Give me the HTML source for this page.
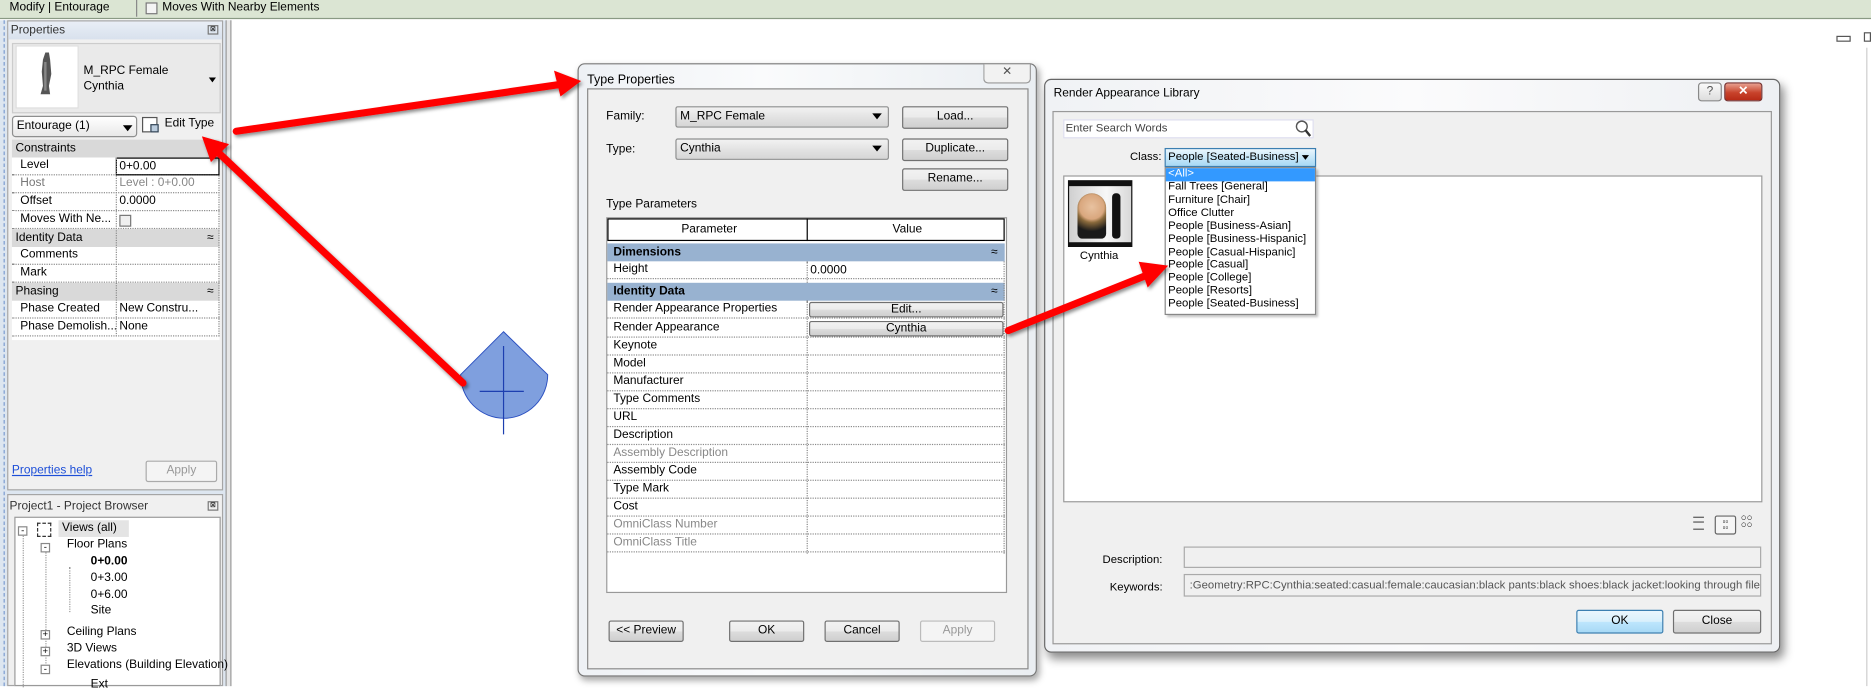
<!DOCTYPE html>
<html><head><meta charset="utf-8"><style>
*{box-sizing:border-box;margin:0;padding:0}
html,body{width:1871px;height:686px;overflow:hidden;background:#fff}
#w{position:absolute;left:0;top:0;width:1568px;height:575px;transform:scale(1.19324);transform-origin:0 0;font-family:"Liberation Sans",sans-serif;font-size:10px;color:#000}
.a{position:absolute}
.t{position:absolute;white-space:nowrap;line-height:12px}
.btn{position:absolute;border:1px solid #707070;border-radius:2px;background:linear-gradient(#f2f2f2,#ebebeb 50%,#dddddd 51%,#cfcfcf);text-align:center;line-height:16px;font-size:10px}
.sel{position:absolute;border:1px solid #8e8f8f;border-radius:2px;background:linear-gradient(#f2f2f2,#e3e3e3 50%,#d6d6d6);line-height:15px;padding-left:3px;font-size:10px}
.arr{position:absolute;width:0;height:0;border-left:4px solid transparent;border-right:4px solid transparent;border-top:5px solid #000}
.row{position:absolute;height:15px;border-bottom:1px dotted #8a8a8a;line-height:14px;font-size:10px}
.gh{position:absolute;background:#d9d9d9;height:15px;line-height:15px;font-size:10px}
</style></head><body><div id="w">
<div class="a" style="left:0;top:0;width:1568px;height:16px;background:#dbe5d3;border-bottom:1px solid #8a9a84"></div>
<div class="t" style="left:8px;top:1px;font-size:10px">Modify | Entourage</div>
<div class="a" style="left:114px;top:0;width:1px;height:14px;background:#888"></div>
<div class="a" style="left:122px;top:2px;width:10px;height:10px;border:1px solid #777;background:#f4f4f4"></div>
<div class="t" style="left:136px;top:1px">Moves With Nearby Elements</div>
<div class="a" style="left:1539px;top:30px;width:12px;height:5px;border:1px solid #555"></div>
<div class="a" style="left:1562px;top:27px;width:6px;height:8px;border:1px solid #555"></div>
<div class="a" style="left:1564px;top:40px;width:1px;height:535px;background:#ccc"></div>

<div class="a" style="left:0;top:17px;width:194px;height:558px;background:#dde6f0"></div>
<div class="a" style="left:3px;top:17px;width:0;height:558px;border-left:1px dashed #7a9ad0"></div>
<div class="a" style="left:189px;top:17px;width:5px;height:558px;background:#e6e6e6;border-left:1px solid #999;border-right:1px solid #999"></div>
<div class="a" style="left:6px;top:17px;width:181px;height:394px;background:#f0f0f0;border:1px solid #a5a5a5"></div>
<div class="a" style="left:7px;top:18px;width:179px;height:15px;background:linear-gradient(#e9eef6,#d8e1ed)"></div>
<div class="t" style="left:9px;top:20px;color:#333">Properties</div>
<div class="a" style="left:174px;top:21px;width:9px;height:8px;border:1px solid #777;font-size:6px;line-height:6px;text-align:center">⊠</div>
<div class="a" style="left:10px;top:36px;width:175px;height:59px;background:#eaeaea;border:1px solid #ccc"></div>
<div class="a" style="left:13px;top:38px;width:53px;height:53px;background:#fff;border:1px solid #ddd"></div>
<svg class="a" style="left:28px;top:42px" width="22" height="40"><path d="M10 2 L13 2 L14 8 L15 20 L13 30 L14 37 L6 37 L8 30 L7 18 L8 8Z" fill="#555"/><path d="M9 10 L11 10 L11 34 L9 34Z" fill="#888"/></svg>
<div class="t" style="left:70px;top:54px">M_RPC Female</div>
<div class="t" style="left:70px;top:67px">Cynthia</div>
<div class="arr" style="left:175px;top:65px;border-width:4px 3px 0 3px"></div>
<div class="sel" style="left:10px;top:97px;width:105px;height:18px;background:linear-gradient(#fff,#e8e8e8);border-radius:3px;line-height:16px">Entourage (1)</div>
<div class="arr" style="left:103px;top:105px"></div>
<div class="a" style="left:119px;top:98px;width:13px;height:13px;border:1px solid #555;background:#fff"></div>
<div class="a" style="left:126px;top:104px;width:7px;height:7px;border:1px solid #345;background:#bcd"></div>
<div class="t" style="left:138px;top:98px">Edit Type</div>
<div class="a" style="left:10px;top:117px;width:174px;height:168px;background:#fff"></div>
<div class="gh" style="left:10px;top:117px;width:174px;padding-left:3px">Constraints</div>
<div class="row" style="left:10px;top:132px;width:174px;padding-left:7px">Level</div>
<div class="a" style="left:97px;top:132px;width:87px;height:15px;border:1px solid #000;padding-left:2px;line-height:13px;font-size:10px">0+0.00</div>
<div class="row" style="left:10px;top:147px;width:174px;padding-left:7px;color:#777">Host</div>
<div class="t" style="left:100px;top:148px;color:#888">Level : 0+0.00</div>
<div class="row" style="left:10px;top:162px;width:174px;padding-left:7px">Offset</div>
<div class="t" style="left:100px;top:163px">0.0000</div>
<div class="row" style="left:10px;top:177px;width:174px;padding-left:7px">Moves With Ne...</div>
<div class="a" style="left:100px;top:180px;width:10px;height:10px;border:1px solid #777;background:#f0f0f0"></div>
<div class="gh" style="left:10px;top:192px;width:174px;padding-left:3px">Identity Data<span style="position:absolute;right:5px">≈</span></div>
<div class="row" style="left:10px;top:207px;width:174px;padding-left:7px">Comments</div>
<div class="row" style="left:10px;top:222px;width:174px;padding-left:7px">Mark</div>
<div class="gh" style="left:10px;top:237px;width:174px;padding-left:3px">Phasing<span style="position:absolute;right:5px">≈</span></div>
<div class="row" style="left:10px;top:252px;width:174px;padding-left:7px">Phase Created</div>
<div class="t" style="left:100px;top:253px">New Constru...</div>
<div class="row" style="left:10px;top:267px;width:174px;padding-left:7px">Phase Demolish...</div>
<div class="t" style="left:100px;top:268px">None</div>
<div class="a" style="left:97px;top:132px;width:0;height:150px;border-left:1px dotted #8a8a8a"></div>
<div class="a" style="left:183px;top:147px;width:0;height:135px;border-left:1px dotted #8a8a8a"></div>
<div class="t" style="left:10px;top:389px;color:#1c4ed8;text-decoration:underline">Properties help</div>
<div class="btn" style="left:122px;top:386px;width:60px;height:18px;color:#999;border-color:#aaa;background:#f4f4f4">Apply</div>
<div class="a" style="left:6px;top:414px;width:181px;height:161px;background:#f0f0f0;border:1px solid #a5a5a5"></div>
<div class="t" style="left:8px;top:419px;color:#333">Project1 - Project Browser</div>
<div class="a" style="left:174px;top:420px;width:9px;height:8px;border:1px solid #777;font-size:6px;line-height:6px;text-align:center">⊠</div>
<div class="a" style="left:12px;top:433px;width:173px;height:142px;background:#fff;border:1px solid #999"></div>
<div class="a" style="left:19px;top:446px;height:130px;border-left:1px dotted #999"></div>
<div class="a" style="left:38px;top:460px;height:96px;border-left:1px dotted #999"></div>
<div class="a" style="left:58px;top:475px;height:38px;border-left:1px dotted #999"></div>
<div class="a" style="left:15px;top:441px;width:8px;height:8px;border:1px solid #888;background:#fff;font-size:8px;line-height:5px;text-align:center">-</div>
<div class="a" style="left:31px;top:438px;width:12px;height:12px;border:1px dashed #333"></div>
<div class="a" style="left:49px;top:436px;width:59px;height:14px;background:#e4e4e4"></div>
<div class="t" style="left:52px;top:437px">Views (all)</div>
<div class="a" style="left:34px;top:455px;width:8px;height:8px;border:1px solid #888;background:#fff;font-size:8px;line-height:5px;text-align:center">-</div>
<div class="t" style="left:56px;top:451px">Floor Plans</div>
<div class="t" style="left:76px;top:465px;font-weight:bold">0+0.00</div>
<div class="t" style="left:76px;top:479px">0+3.00</div>
<div class="t" style="left:76px;top:493px">0+6.00</div>
<div class="t" style="left:76px;top:506px">Site</div>
<div class="a" style="left:34px;top:528px;width:8px;height:8px;border:1px solid #888;background:#fff;font-size:8px;line-height:6px;text-align:center">+</div>
<div class="t" style="left:56px;top:524px">Ceiling Plans</div>
<div class="a" style="left:34px;top:542px;width:8px;height:8px;border:1px solid #888;background:#fff;font-size:8px;line-height:6px;text-align:center">+</div>
<div class="t" style="left:56px;top:538px">3D Views</div>
<div class="a" style="left:34px;top:557px;width:8px;height:8px;border:1px solid #888;background:#fff;font-size:8px;line-height:5px;text-align:center">-</div>
<div class="t" style="left:56px;top:552px">Elevations (Building Elevation)</div>
<div class="t" style="left:76px;top:568px">Ext</div>

<div class="a" style="left:484px;top:53px;width:385px;height:514px;background:linear-gradient(90deg,#eef1f5,#fafbfc 40%,#eaeef2);border:1px solid #777;border-radius:6px;box-shadow:2px 3px 6px rgba(0,0,0,.35)"></div>
<div class="t" style="left:492px;top:61px;font-size:10.5px">Type Properties</div>
<div class="a" style="left:824px;top:54px;width:40px;height:16px;border:1px solid #999;border-top:none;border-radius:0 0 4px 4px;background:#f2f2f2;text-align:center;font-size:10px;color:#555;line-height:14px">✕</div>
<div class="a" style="left:492px;top:74px;width:370px;height:487px;background:#f0f0f0;border:1px solid #8a8a8a"></div>
<div class="t" style="left:508px;top:92px">Family:</div>
<div class="sel" style="left:566px;top:89px;width:179px;height:18px">M_RPC Female</div>
<div class="arr" style="left:731px;top:95px"></div>
<div class="btn" style="left:756px;top:89px;width:89px;height:19px">Load...</div>
<div class="t" style="left:508px;top:120px">Type:</div>
<div class="sel" style="left:566px;top:116px;width:179px;height:18px">Cynthia</div>
<div class="arr" style="left:731px;top:122px"></div>
<div class="btn" style="left:756px;top:116px;width:89px;height:19px">Duplicate...</div>
<div class="btn" style="left:756px;top:141px;width:89px;height:19px">Rename...</div>
<div class="t" style="left:508px;top:166px">Type Parameters</div>
<div class="a" style="left:508px;top:182px;width:336px;height:315px;background:#fff;border:1px solid #999"></div>
<div class="a" style="left:509px;top:183px;width:333px;height:19px;border:1px solid #000"></div>
<div class="a" style="left:676px;top:183px;width:1px;height:19px;background:#000"></div>
<div class="t" style="left:571px;top:187px">Parameter</div>
<div class="t" style="left:748px;top:187px">Value</div>
<div class="a" style="left:509px;top:204px;width:333px;height:15px;background:#98b2d0;font-weight:bold;line-height:15px;padding-left:5px">Dimensions<span style="position:absolute;right:6px;font-weight:normal">≈</span></div>
<div class="row" style="left:509px;top:219px;width:333px;padding-left:5px">Height</div>
<div class="t" style="left:679px;top:221px">0.0000</div>
<div class="a" style="left:509px;top:237px;width:333px;height:15px;background:#98b2d0;font-weight:bold;line-height:15px;padding-left:5px">Identity Data<span style="position:absolute;right:6px;font-weight:normal">≈</span></div>
<div class="row" style="left:509px;top:252px;width:333px;padding-left:5px">Render Appearance Properties</div>
<div class="row" style="left:509px;top:268px;width:333px;padding-left:5px">Render Appearance</div>
<div class="row" style="left:509px;top:283px;width:333px;padding-left:5px">Keynote</div>
<div class="row" style="left:509px;top:298px;width:333px;padding-left:5px">Model</div>
<div class="row" style="left:509px;top:313px;width:333px;padding-left:5px">Manufacturer</div>
<div class="row" style="left:509px;top:328px;width:333px;padding-left:5px">Type Comments</div>
<div class="row" style="left:509px;top:343px;width:333px;padding-left:5px">URL</div>
<div class="row" style="left:509px;top:358px;width:333px;padding-left:5px">Description</div>
<div class="row" style="left:509px;top:373px;width:333px;padding-left:5px;color:#888">Assembly Description</div>
<div class="row" style="left:509px;top:388px;width:333px;padding-left:5px">Assembly Code</div>
<div class="row" style="left:509px;top:403px;width:333px;padding-left:5px">Type Mark</div>
<div class="row" style="left:509px;top:418px;width:333px;padding-left:5px">Cost</div>
<div class="row" style="left:509px;top:433px;width:333px;padding-left:5px;color:#888">OmniClass Number</div>
<div class="row" style="left:509px;top:448px;width:333px;padding-left:5px;color:#888">OmniClass Title</div>
<div class="a" style="left:676px;top:219px;height:18px;border-left:1px dotted #888"></div>
<div class="a" style="left:676px;top:252px;height:212px;border-left:1px dotted #888"></div>
<div class="a" style="left:841px;top:219px;height:245px;border-left:1px dotted #888"></div>
<div class="btn" style="left:678px;top:253px;width:163px;height:13px;line-height:11px">Edit...</div>
<div class="btn" style="left:678px;top:269px;width:163px;height:13px;line-height:11px">Cynthia</div>
<div class="btn" style="left:510px;top:520px;width:63px;height:18px">&lt;&lt; Preview</div>
<div class="btn" style="left:611px;top:520px;width:63px;height:18px">OK</div>
<div class="btn" style="left:691px;top:520px;width:63px;height:18px">Cancel</div>
<div class="btn" style="left:771px;top:520px;width:63px;height:18px;color:#999;border-color:#bbb;background:#f4f4f4">Apply</div>

<div class="a" style="left:875px;top:66px;width:617px;height:481px;background:linear-gradient(90deg,#f0f2f5,#fbfbfc 50%,#eef0f3);border:1px solid #666;border-radius:6px;box-shadow:3px 5px 8px rgba(0,0,0,.45)"></div>
<div class="t" style="left:883px;top:73px">Render Appearance Library</div>
<div class="a" style="left:1423px;top:69px;width:20px;height:16px;border:1px solid #888;border-radius:3px;background:linear-gradient(#fafafa,#ddd);text-align:center;color:#555;line-height:14px">?</div>
<div class="a" style="left:1445px;top:69px;width:32px;height:16px;border:1px solid #733;border-radius:3px;background:linear-gradient(#e8a090,#c8432b 55%,#b72a16);text-align:center;color:#fff;font-weight:bold;line-height:14px">✕</div>
<div class="a" style="left:882px;top:93px;width:603px;height:447px;background:#f0f0f0;border:1px solid #999"></div>
<div class="a" style="left:891px;top:100px;width:210px;height:16px;background:#fff;border:1px solid #dde"></div>
<div class="t" style="left:893px;top:102px;color:#444;font-size:9.5px">Enter Search Words</div>
<svg class="a" style="left:1085px;top:100px" width="14" height="15"><circle cx="6" cy="6" r="4.5" fill="none" stroke="#555" stroke-width="1.2"/><path d="M9 9 L13 14" stroke="#333" stroke-width="2"/></svg>
<div class="t" style="left:947px;top:126px;font-size:9.5px">Class:</div>
<div class="a" style="left:976px;top:124px;width:127px;height:16px;border:1px solid #3c7fb1;background:linear-gradient(#eaf6fd,#a7d9f5);line-height:14px;padding-left:2px;font-size:9.5px">People [Seated-Business]</div>
<div class="arr" style="left:1091px;top:130px;border-width:4px 3px 0 3px"></div>
<div class="a" style="left:891px;top:147px;width:586px;height:274px;background:#fff;border:1px solid #999"></div>
<div class="a" style="left:895px;top:151px;width:54px;height:56px;background:#111"></div>
<div class="a" style="left:896px;top:156px;width:52px;height:47px;background:linear-gradient(90deg,#d0d0d0,#f7f7f7 60%,#d8d8d8)"></div>
<div class="a" style="left:903px;top:162px;width:24px;height:38px;border-radius:12px 12px 4px 4px;background:radial-gradient(circle at 50% 30%,#e8c2a0 0,#d9a77e 35%,#8a6a3c 45%,#1a1a1a 70%)"></div>
<div class="a" style="left:932px;top:162px;width:7px;height:38px;background:#111;border-radius:3px"></div>
<div class="t" style="left:905px;top:209px;font-size:9.5px">Cynthia</div>
<div class="a" style="left:976px;top:140px;width:127px;height:124px;background:#fff;border:1px solid #888;box-shadow:2px 2px 2px rgba(0,0,0,.25)"></div>
<div class="a" style="left:977px;top:141px;width:125px;height:11px;background:#3399ff"></div>
<div class="t" style="left:979px;top:140px;color:#fff;font-size:9.5px;line-height:11px">&lt;All&gt;</div>
<div class="t" style="left:979px;top:152px;font-size:9.5px;line-height:10.9px">Fall Trees [General]<br>Furniture [Chair]<br>Office Clutter<br>People [Business-Asian]<br>People [Business-Hispanic]<br>People [Casual-Hispanic]<br>People [Casual]<br>People [College]<br>People [Resorts]<br>People [Seated-Business]</div>
<div class="a" style="left:1419px;top:433px;width:9px;height:11px;border-top:1px solid #555;border-bottom:1px solid #555"></div>
<div class="a" style="left:1419px;top:437px;width:9px;height:3px;border-top:1px solid #555"></div>
<div class="a" style="left:1437px;top:432px;width:18px;height:16px;border:1px solid #666;border-radius:2px;background:#f6f6f6;font-size:7px;line-height:5px;text-align:center;padding-top:2px">▫▫<br>▫▫</div>
<div class="a" style="left:1459px;top:431px;width:14px;height:14px;font-size:8px;line-height:6px">○○<br>○○</div>
<div class="t" style="left:924px;top:464px;font-size:9.5px">Description:</div>
<div class="a" style="left:992px;top:458px;width:484px;height:18px;border:1px solid #aaa;background:#f0f0f0"></div>
<div class="t" style="left:930px;top:487px;font-size:9.5px">Keywords:</div>
<div class="a" style="left:992px;top:481px;width:484px;height:19px;border:1px solid #aaa;background:#f0f0f0;overflow:hidden;white-space:nowrap;font-size:9.5px;color:#555;line-height:17px;padding-left:4px">:Geometry:RPC:Cynthia:seated:casual:female:caucasian:black pants:black shoes:black jacket:looking through file folder</div>
<div class="btn" style="left:1321px;top:511px;width:73px;height:20px;border-color:#3c7fb1;background:linear-gradient(#eaf6fd,#d9f0fc 50%,#bee6fd 51%,#a7d9f5);line-height:18px">OK</div>
<div class="btn" style="left:1402px;top:511px;width:74px;height:20px;line-height:18px">Close</div>

<svg class="a" style="left:0;top:0" width="1568" height="575">
<defs><filter id="sh" x="-10%" y="-10%" width="130%" height="130%"><feDropShadow dx="1.5" dy="2" stdDeviation="1.5" flood-color="#000" flood-opacity=".45"/></filter></defs>
<path d="M422 278 L386 314 A36.5 36.5 0 1 0 459 314 Z" fill="#7f9fde" stroke="#2a4fc0" stroke-width="0.8"/>
<path d="M422 290 V364 M402 328 H439" stroke="#1d3fb0" stroke-width="1"/>
<g filter="url(#sh)" fill="#ff0000" stroke="#ff0000" stroke-linecap="round">
<path d="M198 110 L468 71" stroke-width="6" fill="none"/>
<path d="M486 68 L465 60 L470 80 Z"/>
<path d="M388 321 L182 127" stroke-width="6" fill="none"/>
<path d="M170 115 L191 121 L177 135 Z"/>
<path d="M845 277 L960 231" stroke-width="6" fill="none"/>
<path d="M978 223 L955 220 L962 240 Z"/>
</g>
</svg>
</div></body></html>
